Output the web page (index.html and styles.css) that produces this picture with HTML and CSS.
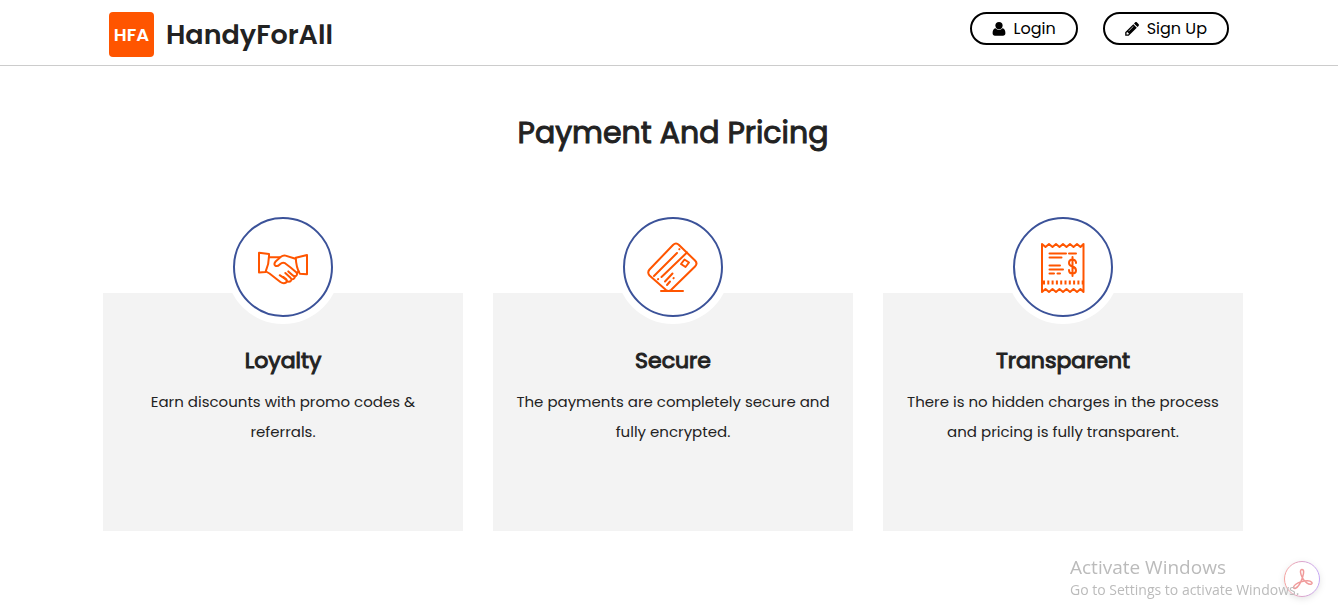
FILE: index.html
```html
<!DOCTYPE html>
<html lang="en">
  <head>
    <meta charset="UTF-8" />
    <meta name="viewport" content="width=device-width, initial-scale=1.0" />
    <title>HandyForAll - Payment And Pricing</title>
    <link rel="stylesheet" href="styles.css">
  </head>
  <body>
    <header class="header">
      <div class="container header-inner">
        <a href="#" class="logo">
          <span class="logo-mark">HFA</span>
          <span class="logo-name">HandyForAll</span>
        </a>
        <nav class="header-links">
          <a href="#" class="btn">
            <svg class="btn-icon" viewBox="0 0 14 14" aria-hidden="true">
              <circle cx="7" cy="3.600" r="3.600" />
              <path d="M3.600 6.200C1.300 6.600.6 8.800.6 11.200c0 1.400.9 2.500 2.400 2.500h8c1.500 0 2.400-1.100 2.400-2.500 0-2.400-.7-4.600-3-5C8.500 8.200 5.500 8.200 3.600 6.200z" />
            </svg>
            Login
          </a>
          <a href="#" class="btn">
            <svg class="btn-icon" viewBox="0 0 14 14" aria-hidden="true">
              <path fill-rule="evenodd" d="M8.300 2.200l3.500 3.500-8.100 8.100H.2v-3.500zM1.500 10.800v1.700h1.700l.8-.8L2.300 10zM8.100 4.200L3.400 8.900l.4.400 4.700-4.700zM9 1.500l1-1c.6-.6 1.400-.6 2 0L13.500 2c.6.6.6 1.400 0 2l-1 1z" />
            </svg>
            Sign Up
          </a>
        </nav>
      </div>
    </header>

    <main class="pricing">
      <h1>Payment And Pricing</h1>
      <div class="container cards">
        <section class="card">
          <div class="card-icon">
            <svg viewBox="0 0 50 50" aria-hidden="true">
              <path d="M1 10.800L11 12Q11.400 21 7.500 30L1 30.400z" />
              <path d="M49 13L37.800 15.800Q38 25 41.800 31.800L49 32.200z" />
              <path d="M11 15.300H21.500" />
              <path d="M37.500 16.800L27.500 13.600Q25 13 22.600 15L17.600 19.500Q15.500 22 17.200 23.600Q19.200 25 22 22.200Q24.500 19.800 27 21.200Q33 25.500 38.200 30.200Q40 32.500 38 34Q36.400 35 34.600 33.300L30.300 29.400" />
              <path d="M8 29.500L11.500 31.500L22.400 40Q25.600 42.200 28.300 40.400Q29.600 39.200 28.300 37.600L25.400 35" />
              <path d="M28.600 39.200Q31.500 40.600 33 38.600Q33.900 37.200 32.500 35.700L27.300 31M33.200 37Q36.500 38 37 34.200M28.300 37.600L21.700 33.200M38.800 31L40.800 29.400" />
            </svg>
          </div>
          <h2>Loyalty</h2>
          <p>Earn discounts with promo codes &amp; referrals.</p>
        </section>
        <section class="card">
          <div class="card-icon">
            <svg viewBox="0 0 50 50" aria-hidden="true">
              <path d="M25 3Q28 0 31 3L47 18.500Q50 21.500 47 24.500L23 48Q20.500 50 18 48L1.500 33.500Q-1 30.500 1.500 27.500z" />
              <path d="M29 11L6 34M39 10.500L13.500 35M31.300 7.300L31.500 7.100" />
              <path d="M10 37.200L10.200 37M24.500 31.500L17 39.500M22 39.500L19 43M25.500 36.200L25.700 36" />
              <path d="M36.500 17.500L41 20.500L37.500 25L33 22zM13 49H35" />
            </svg>
          </div>
          <h2>Secure</h2>
          <p>The payments are completely secure and fully encrypted.</p>
        </section>
        <section class="card">
          <div class="card-icon">
            <svg viewBox="0 0 50 50" aria-hidden="true">
              <path d="M4 2L7.500 5L11 2L14.500 5L18 2L21.500 5L25 2L28.500 5L32 2L35.500 5L39 2L42.500 5L45.500 2V50L42.500 47L39 50L35.500 47L32 50L28.500 47L25 50L21.500 47L18 50L14.500 47L11 50L7.500 47L4 50z" />
              <path d="M11.500 11.500H28M31 11.500H38M11.500 15.500H23.500M11.500 23.500H22M11.500 27.500H25M11.500 31.500H16M19.500 31.500H22" />
              <path d="M34.500 15V34M38 21V20Q37 17.500 34.500 17.500Q31 17.500 31 21Q31 23.500 34.500 24.500Q38 25.500 38 28.500Q38 31.500 34.500 31.500Q31 31.500 31 28" />
              <path class="perforation" d="M5 40.500H45" stroke-dasharray="2 2.300" />
            </svg>
          </div>
          <h2>Transparent</h2>
          <p>There is no hidden charges in the process and pricing is fully transparent.</p>
        </section>
      </div>
    </main>

    <button type="button" class="pdf-button" aria-label="Open in Acrobat">
      <svg viewBox="0 0 44 44" aria-hidden="true">
        <defs>
          <linearGradient id="ring" x1="0" y1="0" x2="1" y2="0">
            <stop offset="0" stop-color="#f4a3a0" />
            <stop offset="1" stop-color="#c5a8f5" />
          </linearGradient>
        </defs>
        <circle cx="22" cy="22" r="17.500" fill="#fff" stroke="url(#ring)" />
        <path d="M22 12.500C19.600 12.500 20.300 17 22.500 21C24.800 25 28.500 27.800 31 27.300C33.500 26.500 31.500 23.800 27.500 23.800C23 23.800 18.500 25.300 15.500 27.500C12.500 29.800 13.300 32.200 15.500 31.300C18 30.200 21 25 22.500 20.500C24 16 24.200 12.500 22 12.500z" fill="none" stroke="#f09a9a" stroke-width="1.500" />
      </svg>
    </button>

    <div class="watermark">
      <div class="watermark-title">Activate Windows</div>
      <div class="watermark-text">Go to Settings to activate Windows.</div>
    </div>
  </body>
</html>
```
FILE: styles.css
```css
* {
  box-sizing: border-box;
}
body {
  margin: 0;
  font-family: Poppins, Inter, sans-serif;
  color: #222;
  background-color: #fff;
}
a {
  color: inherit;
  text-decoration: none;
}
.container {
  max-width: 1140px;
  margin: 0 auto;
}
.header {
  border-bottom: 1px solid #ccc;
}
.header-inner {
  display: flex;
  justify-content: space-between;
  align-items: flex-start;
  padding: 12px 10px 8px;
}
.logo {
  display: flex;
  align-items: center;
  gap: 12px;
}
.logo-mark {
  display: flex;
  justify-content: center;
  align-items: center;
  width: 45px;
  height: 45px;
  border-radius: 4px;
  background-color: #ff5500;
  color: #fff;
  font-size: 18px;
  font-weight: 600;
}
.logo-name {
  font-size: 27px;
  font-weight: 600;
}
.header-links {
  display: flex;
  gap: 25px;
}
.btn {
  display: flex;
  align-items: center;
  gap: 8px;
  height: 33px;
  padding: 0 20px;
  border: 2px solid #000;
  border-radius: 17px;
  color: #000;
  font-size: 16px;
  line-height: 24px;
}
.btn-icon {
  width: 14px;
  height: 14px;
}
.pricing {
  padding: 45px 0 83px 8px;
}
h1 {
  margin: 0;
  font-size: 30px;
  font-weight: 400;
  line-height: 44px;
  text-align: center;
  -webkit-text-stroke: 1px #222;
}
.cards {
  display: grid;
  grid-template-columns: repeat(3, 1fr);
  gap: 30px;
  margin-top: 138px;
}
.card {
  min-height: 238px;
  padding: 0 20px 20px;
  background-color: #f3f3f3;
  text-align: center;
}
.card-icon {
  display: flex;
  justify-content: center;
  align-items: center;
  width: 100px;
  height: 100px;
  margin: -76px auto 0;
  border: 2px solid #3b5299;
  border-radius: 50%;
  background-color: #fff;
  box-shadow: 0 0 0 7px #fff;
}
.card-icon svg {
  width: 50px;
  height: 50px;
  overflow: visible;
  fill: none;
  stroke: #ff5500;
  stroke-width: 2;
  stroke-linecap: round;
  stroke-linejoin: round;
}
.card-icon .perforation {
  stroke-width: 4;
  stroke-linecap: butt;
}
h2 {
  margin: 28px 0 10px;
  font-size: 22px;
  font-weight: 400;
  line-height: 32px;
  -webkit-text-stroke: 1px #222;
}
p {
  margin: 0;
  font-size: 15px;
  line-height: 30px;
}
.watermark {
  position: fixed;
  right: 32px;
  bottom: 14px;
  min-width: 236px;
  color: #bbb;
  font-family: "Open Sans", sans-serif;
  pointer-events: none;
}
.watermark-title {
  font-size: 19px;
  line-height: 26px;
}
.watermark-text {
  font-size: 14px;
  line-height: 20px;
}
.pdf-button {
  position: fixed;
  right: 14px;
  bottom: 13px;
  width: 44px;
  height: 44px;
  padding: 0;
  border: none;
  background: none;
  cursor: pointer;
}
.pdf-button svg {
  display: block;
  filter: drop-shadow(0 2px 3px rgba(0, 0, 0, 0.1));
}
```
